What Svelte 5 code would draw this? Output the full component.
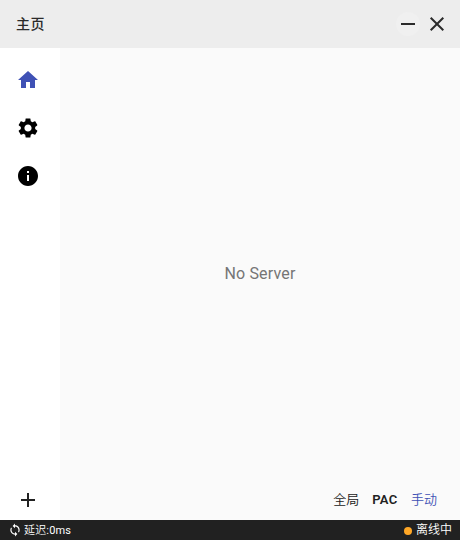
<script>
  const modes = [{ label: '全局' }, { label: 'PAC', latin: true }, { label: '手动', active: true }];
  const nav = [
    { d: 'M10 20v-6h4v6h5v-8h3L12 3 2 12h3v8z', active: true },
    { d: 'M19.14 12.94c.04-.3.06-.61.06-.94 0-.32-.02-.64-.07-.94l2.03-1.58c.18-.14.23-.41.12-.61l-1.92-3.32c-.12-.22-.37-.29-.59-.22l-2.39.96c-.5-.38-1.03-.7-1.62-.94l-.36-2.54c-.04-.24-.24-.41-.48-.41h-3.84c-.24 0-.43.17-.47.41l-.36 2.54c-.59.24-1.13.57-1.62.94l-2.39-.96c-.22-.08-.47 0-.59.22L2.74 8.87c-.12.21-.08.47.12.61l2.03 1.58c-.05.3-.09.63-.09.94s.02.64.07.94l-2.03 1.58c-.18.14-.23.41-.12.61l1.92 3.32c.12.22.37.29.59.22l2.39-.96c.5.38 1.03.7 1.62.94l.36 2.54c.05.24.24.41.48.41h3.84c.24 0 .44-.17.47-.41l.36-2.54c.59-.24 1.13-.56 1.62-.94l2.39.96c.22.08.47 0 .59-.22l1.92-3.32c.12-.22.07-.47-.12-.61l-2.01-1.58zM12 15.6c-1.98 0-3.6-1.62-3.6-3.6s1.62-3.6 3.6-3.6 3.6 1.62 3.6 3.6-1.62 3.6-3.6 3.6z' },
    { d: 'M12 2C6.48 2 2 6.48 2 12s4.48 10 10 10 10-4.48 10-10S17.52 2 12 2zm1 15h-2v-6h2v6zm0-8h-2V7h2v2z' }
  ];
</script>

<div class="window">
  <header>
    <h1>主页</h1>
    <div class="controls">
      <button class="min" aria-label="Minimize"><svg width="24" height="24" viewBox="0 0 24 24"><path d="M5 12h14" /></svg></button>
      <button aria-label="Close"><svg width="24" height="24" viewBox="0 0 24 24"><path d="M5.7 5.7l12.6 12.6M18.3 5.7L5.7 18.3" /></svg></button>
    </div>
  </header>
  <div class="body">
    <nav>
      {#each nav as item}
        <div class="item" class:active={item.active}><svg width="24" height="24" viewBox="0 0 24 24"><path d={item.d} /></svg></div>
      {/each}
      <div class="item add"><svg width="24" height="24" viewBox="0 0 24 24"><path d="M19 13h-6v6h-2v-6H5v-2h6V5h2v6h6z" /></svg></div>
    </nav>
    <main>
      <p>No Server</p>
      <div class="modes">
        {#each modes as m}<span class:active={m.active} class:latin={m.latin}>{m.label}</span>{/each}
      </div>
    </main>
  </div>
  <footer>
    <span class="delay"><svg width="14" height="14" viewBox="0 0 24 24"><path d="M12 4V1L8 5l4 4V6c3.31 0 6 2.69 6 6 0 1.01-.25 1.97-.7 2.8l1.46 1.46C19.54 15.03 20 13.57 20 12c0-4.42-3.58-8-8-8zm0 14c-3.31 0-6-2.69-6-6 0-1.01.25-1.97.7-2.8L5.24 7.74C4.46 8.97 4 10.43 4 12c0 4.42 3.58 8 8 8v3l4-4-4-4v3z" /></svg><b>延迟<em>:0ms</em></b></span>
    <span class="status"><i></i>离线中</span>
  </footer>
</div>

<style>
  .window { width: 460px; height: 540px; display: flex; flex-direction: column; background: #fafafa; font-family: Roboto, "Noto Sans CJK SC", sans-serif; overflow: hidden; }
  header { height: 48px; flex: none; box-sizing: border-box; padding: 0 11px 0 16px; display: flex; align-items: center; justify-content: space-between; background: #ededed; color: #2b2b2b; }
  h1 { margin: 0; font-size: 14px; line-height: 20px; font-weight: 500; letter-spacing: .4px; }
  .controls { display: flex; gap: 5px; }
  button { width: 24px; height: 24px; border: 0; padding: 0; background: none; color: #2b2b2b; }
  svg { display: block; fill: currentColor; }
  button svg { fill: none; stroke: currentColor; stroke-width: 2; }
  .min { background: #f0f0f0; border-radius: 50%; }
  .body { flex: 1; min-height: 0; display: flex; }
  nav { width: 60px; padding: 8px 0 0; box-sizing: border-box; background: #fff; display: flex; flex-direction: column; color: #000; }
  .item { width: 56px; height: 48px; display: flex; align-items: center; justify-content: center; }
  .item.active { color: #3f51b5; }
  .add { margin-top: auto; height: 40px; color: #212121; }
  main { flex: 1; display: flex; flex-direction: column; }
  p { margin: 0; flex: 1; padding-top: 18px; display: flex; align-items: center; justify-content: center; font-size: 16px; letter-spacing: .15px; color: #757575; }
  .modes { height: 40px; box-sizing: border-box; padding: 0 23px 2px 0; display: flex; align-items: center; justify-content: flex-end; gap: 13px; font-size: 13px; font-weight: 350; color: #212121; }
  .modes span:not(.latin) { padding-bottom: 2px; }
  .modes .active { color: #3f51b5; }
  .latin { font-weight: 600; letter-spacing: .3px; margin-right: .5px; }
  footer { height: 20px; flex: none; box-sizing: border-box; padding: 0 8px; display: flex; align-items: center; justify-content: space-between; background: #212121; color: #fff; font-size: 12px; line-height: 20px; font-weight: 350; }
  footer span { display: flex; align-items: center; }
  .delay { font-size: 11px; gap: 2px; letter-spacing: .13px; }
  b { font-weight: 350; padding-top: 1px; }
  em { font-style: normal; font-weight: 400; letter-spacing: .2px; }
  .status { gap: 4px; }
  i { width: 8px; height: 8px; margin-top: 2px; border-radius: 50%; background: #ffa726; }
</style>
